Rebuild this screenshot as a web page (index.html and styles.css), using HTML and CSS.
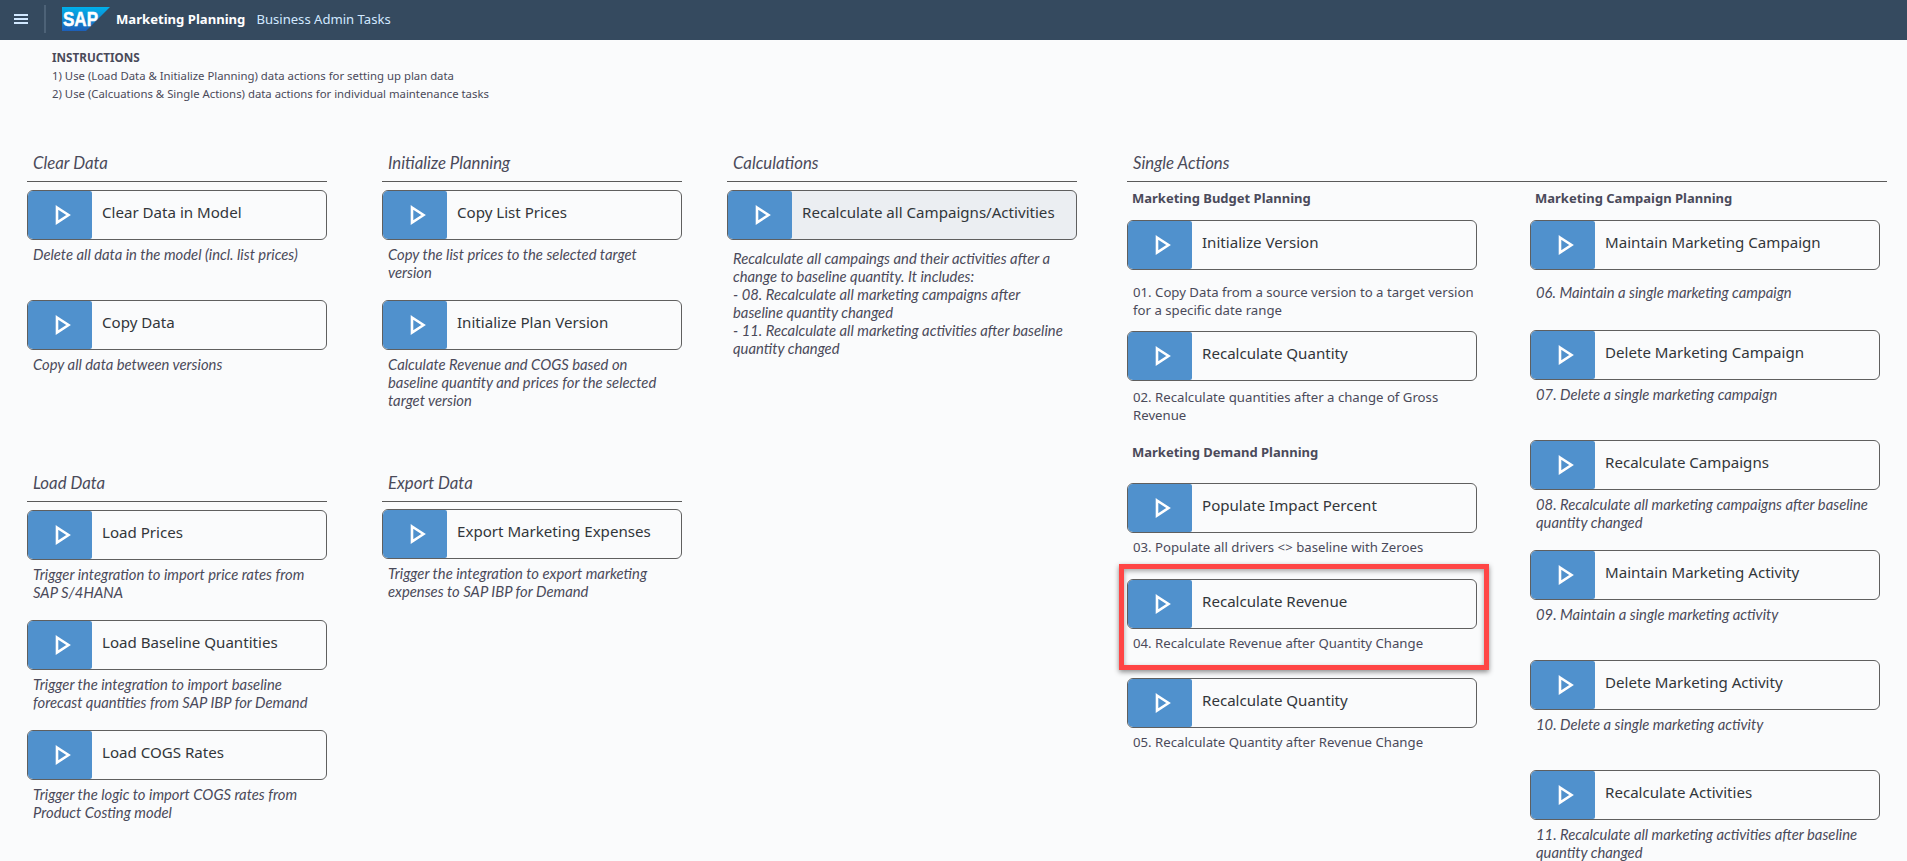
FILE: index.html
```html
<!DOCTYPE html>
<html lang="en">
<head>
    <meta charset="UTF-8">
    <meta name="viewport" content="width=device-width, initial-scale=1.0">
    <title>Marketing Planning - Business Admin Tasks</title>
    <link rel="stylesheet" href="styles.css">
</head>
<body>

    <svg class="icon-defs" width="0" height="0">
        <symbol id="play" viewBox="0 0 16 20">
            <polygon points="2,2.5 13.5,10 2,17.5" fill="none" stroke="#fff" stroke-width="2.6"/>
        </symbol>
    </svg>

    <header class="shell">
        <button class="menu-btn" aria-label="Menu"><span></span><span></span><span></span></button>
        <div class="shell-sep"></div>
        <svg class="logo" width="48" height="24" viewBox="0 0 48 24">
            <defs>
                <linearGradient id="sapBlue" x1="0" y1="0" x2="0" y2="1">
                    <stop offset="0" stop-color="#00b1eb"/>
                    <stop offset="1" stop-color="#1d5fb8"/>
                </linearGradient>
            </defs>
            <polygon points="0,0 48,0 24,24 0,24" fill="url(#sapBlue)"/>
            <text x="1" y="19" class="logo-text" textLength="35" lengthAdjust="spacingAndGlyphs">SAP</text>
        </svg>
        <span class="app-title">Marketing Planning</span>
        <span class="app-subtitle">Business Admin Tasks</span>
    </header>

    <section class="instructions">
        <strong>INSTRUCTIONS</strong>
        <p>1) Use (Load Data &amp; Initialize Planning) data actions for setting up plan data</p>
        <p>2) Use (Calcuations &amp; Single Actions) data actions for individual maintenance tasks</p>
    </section>

    <main class="board">

        <div class="col col-1">
            <section class="group">
                <h2>Clear Data</h2>
                <div class="action">
                    <div class="run"><div class="run-icon"><svg width="16" height="20"><use href="#play"/></svg></div><span>Clear Data in Model</span></div>
                    <p class="desc em">Delete all data in the model (incl. list prices)</p>
                </div>
                <div class="action">
                    <div class="run"><div class="run-icon"><svg width="16" height="20"><use href="#play"/></svg></div><span>Copy Data</span></div>
                    <p class="desc em">Copy all data between versions</p>
                </div>
            </section>
            <section class="group">
                <h2>Load Data</h2>
                <div class="action">
                    <div class="run"><div class="run-icon"><svg width="16" height="20"><use href="#play"/></svg></div><span>Load Prices</span></div>
                    <p class="desc em">Trigger integration to import price rates from<br>SAP S/4HANA</p>
                </div>
                <div class="action">
                    <div class="run"><div class="run-icon"><svg width="16" height="20"><use href="#play"/></svg></div><span>Load Baseline Quantities</span></div>
                    <p class="desc em">Trigger the integration to import baseline<br>forecast quantities from SAP IBP for Demand</p>
                </div>
                <div class="action">
                    <div class="run"><div class="run-icon"><svg width="16" height="20"><use href="#play"/></svg></div><span>Load COGS Rates</span></div>
                    <p class="desc em">Trigger the logic to import COGS rates from<br>Product Costing model</p>
                </div>
            </section>
        </div>

        <div class="col col-2">
            <section class="group">
                <h2>Initialize Planning</h2>
                <div class="action">
                    <div class="run"><div class="run-icon"><svg width="16" height="20"><use href="#play"/></svg></div><span>Copy List Prices</span></div>
                    <p class="desc em">Copy the list prices to the selected target<br>version</p>
                </div>
                <div class="action">
                    <div class="run"><div class="run-icon"><svg width="16" height="20"><use href="#play"/></svg></div><span>Initialize Plan Version</span></div>
                    <p class="desc em">Calculate Revenue and COGS based on<br>baseline quantity and prices for the selected<br>target version</p>
                </div>
            </section>
            <section class="group">
                <h2>Export Data</h2>
                <div class="action action-export">
                    <div class="run"><div class="run-icon"><svg width="16" height="20"><use href="#play"/></svg></div><span>Export Marketing Expenses</span></div>
                    <p class="desc em">Trigger the integration to export marketing<br>expenses to SAP IBP for Demand</p>
                </div>
            </section>
        </div>

        <div class="col col-3">
            <section class="group">
                <h2>Calculations</h2>
                <div class="action">
                    <div class="run run-hover"><div class="run-icon"><svg width="16" height="20"><use href="#play"/></svg></div><span>Recalculate all Campaigns/Activities</span></div>
                    <p class="desc desc-loose em">Recalculate all campaings and their activities after a<br>change to baseline quantity. It includes:<br>- 08. Recalculate all marketing campaigns after<br>baseline quantity changed<br>- 11. Recalculate all marketing activities after baseline<br>quantity changed</p>
                </div>
            </section>
        </div>

        <div class="col col-4">
            <section>
                <h2>Single Actions</h2>
                <div class="single-cols">
                    <div class="sub-col">
                        <h3>Marketing Budget Planning</h3>
                        <div class="action action-first">
                            <div class="run"><div class="run-icon"><svg width="16" height="20"><use href="#play"/></svg></div><span>Initialize Version</span></div>
                            <p class="desc">01. Copy Data from a source version to a target version<br>for a specific date range</p>
                        </div>
                        <div class="action action-fit">
                            <div class="run"><div class="run-icon"><svg width="16" height="20"><use href="#play"/></svg></div><span>Recalculate Quantity</span></div>
                            <p class="desc desc-mid">02. Recalculate quantities after a change of Gross<br>Revenue</p>
                        </div>
                        <h3 class="sub-second">Marketing Demand Planning</h3>
                        <div class="action action-96">
                            <div class="run"><div class="run-icon"><svg width="16" height="20"><use href="#play"/></svg></div><span>Populate Impact Percent</span></div>
                            <p class="desc">03. Populate all drivers &lt;&gt; baseline with Zeroes</p>
                        </div>
                        <div class="action action-99 action-marked">
                            <div class="run"><div class="run-icon"><svg width="16" height="20"><use href="#play"/></svg></div><span>Recalculate Revenue</span></div>
                            <p class="desc">04. Recalculate Revenue after Quantity Change</p>
                        </div>
                        <div class="action action-fit">
                            <div class="run"><div class="run-icon"><svg width="16" height="20"><use href="#play"/></svg></div><span>Recalculate Quantity</span></div>
                            <p class="desc">05. Recalculate Quantity after Revenue Change</p>
                        </div>
                    </div>
                    <div class="sub-col">
                        <h3>Marketing Campaign Planning</h3>
                        <div class="action action-first action-110">
                            <div class="run"><div class="run-icon"><svg width="16" height="20"><use href="#play"/></svg></div><span>Maintain Marketing Campaign</span></div>
                            <p class="desc em">06. Maintain a single marketing campaign</p>
                        </div>
                        <div class="action">
                            <div class="run"><div class="run-icon"><svg width="16" height="20"><use href="#play"/></svg></div><span>Delete Marketing Campaign</span></div>
                            <p class="desc em">07. Delete a single marketing campaign</p>
                        </div>
                        <div class="action">
                            <div class="run"><div class="run-icon"><svg width="16" height="20"><use href="#play"/></svg></div><span>Recalculate Campaigns</span></div>
                            <p class="desc em">08. Recalculate all marketing campaigns after baseline<br>quantity changed</p>
                        </div>
                        <div class="action">
                            <div class="run"><div class="run-icon"><svg width="16" height="20"><use href="#play"/></svg></div><span>Maintain Marketing Activity</span></div>
                            <p class="desc em">09. Maintain a single marketing activity</p>
                        </div>
                        <div class="action">
                            <div class="run"><div class="run-icon"><svg width="16" height="20"><use href="#play"/></svg></div><span>Delete Marketing Activity</span></div>
                            <p class="desc em">10. Delete a single marketing activity</p>
                        </div>
                        <div class="action action-fit">
                            <div class="run"><div class="run-icon"><svg width="16" height="20"><use href="#play"/></svg></div><span>Recalculate Activities</span></div>
                            <p class="desc em">11. Recalculate all marketing activities after baseline<br>quantity changed</p>
                        </div>
                    </div>
                </div>
            </section>
        </div>

    </main>

</body>
</html>
```

FILE: styles.css
```css
body {
    font-family: "Noto Sans", "Open Sans", Arial, sans-serif;
    margin: 0;
    padding: 0;
    height: 861px;
    overflow: hidden;
    background-color: #fafbfc;
    color: #32363a;
}

.icon-defs {
    position: absolute;
}

/* top bar */
.shell {
    display: flex;
    align-items: center;
    height: 40px;
    padding-left: 14px;
    padding-bottom: 3px;
    box-sizing: border-box;
    background-color: #354a5f;
}

.menu-btn {
    display: flex;
    flex-direction: column;
    gap: 2px;
    width: 14px;
    padding: 0;
    background: none;
    border: none;
}

.menu-btn span {
    display: block;
    height: 2px;
    background-color: #d1e8ff;
}

.shell-sep {
    width: 2px;
    height: 28px;
    margin: 0 16px 0 16px;
    background-color: #4d6277;
}

.logo {
    flex: none;
}

.logo-text {
    font-family: "Liberation Sans", Arial, sans-serif;
    font-size: 20px;
    font-weight: bold;
    fill: #fff;
    stroke: #fff;
    stroke-width: 0.5px;
}

.app-title {
    margin-left: 6px;
    font-size: 13.1px;
    font-weight: bold;
    color: #fff;
}

.app-subtitle {
    margin-left: 11px;
    font-size: 13.1px;
    color: #d1e8ff;
}

/* instructions */
.instructions {
    height: 54px;
    margin-top: 8px;
    padding-left: 52px;
    font-size: 11.35px;
    line-height: 18px;
    color: #4a4a5a;
}

.instructions strong {
    font-size: 11.7px;
}

.instructions p {
    margin: 0;
}

/* columns */
.board {
    display: flex;
    margin-top: 48px;
    padding-left: 27px;
}

.col-1,
.col-2 {
    width: 300px;
}

.col-1 {
    margin-right: 55px;
}

.col-2 {
    margin-right: 45px;
}

.col-3 {
    width: 350px;
    margin-right: 50px;
}

.col-4 {
    width: 760px;
}

.group {
    height: 320px;
}

h2 {
    height: 32px;
    margin: 0 0 8px 0;
    padding: 3px 0 0 6px;
    box-sizing: border-box;
    font-family: Lato, "Noto Sans", sans-serif;
    font-size: 16.8px;
    font-weight: normal;
    font-style: italic;
    line-height: 20px;
    color: #4a4a5a;
    border-bottom: 1.5px solid #5a5a5a;
}

h3 {
    margin: 0 0 14px 0;
    padding-left: 5px;
    font-size: 13px;
    font-weight: bold;
    line-height: 16px;
    color: #4a4a5a;
}

.single-cols {
    display: flex;
    gap: 53px;
}

.sub-col {
    width: 350px;
}

.sub-second {
    margin-top: 20px;
    margin-bottom: 23px;
}

/* action = run button + text under it */
.action {
    position: relative;
    min-height: 110px;
}

.action-first {
    min-height: 111px;
}

.action-110 {
    min-height: 110px;
}

.action-fit {
    min-height: 0;
}

.action-96 {
    min-height: 96px;
}

.action-99 {
    min-height: 99px;
}

.action-export {
    margin-top: -1px;
}

.action-marked::after {
    content: "";
    position: absolute;
    top: -15px;
    left: -8px;
    right: -12px;
    height: 96px;
    border: 5px solid #ff4545;
    box-shadow: 0 2px 5px rgba(0, 0, 0, 0.45), inset 0 2px 5px rgba(0, 0, 0, 0.35);
    pointer-events: none;
}

.run {
    display: flex;
    height: 50px;
    box-sizing: border-box;
    border: 1px solid #5f5f5f;
    border-radius: 6px;
    overflow: hidden;
    background-color: #fafbfc;
}

.run-hover {
    background-color: #ebeef2;
}

.run-icon {
    display: flex;
    align-items: center;
    justify-content: center;
    flex: none;
    width: 64px;
    padding-left: 5px;
    box-sizing: border-box;
    background-color: #5091cd;
    border-radius: 0 2px 2px 0;
}

.run span {
    padding: 9px 0 0 10px;
    font-size: 15.1px;
    line-height: 24px;
}

.desc {
    margin: 5px 0 0 0;
    padding-left: 6px;
    font-size: 13.2px;
    line-height: 18px;
    color: #4a4a5a;
}

.em {
    font-family: Lato, "Noto Sans", sans-serif;
    font-size: 14.8px;
    font-style: italic;
}

.desc-loose {
    margin-top: 9px;
}

.desc-mid {
    margin-top: 7px;
}

.action-first .desc {
    margin-top: 13px;
}
```
